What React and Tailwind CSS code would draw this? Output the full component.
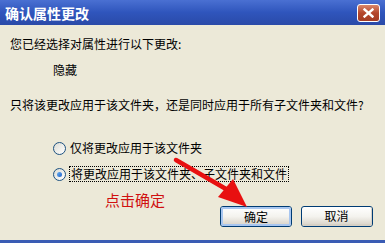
import React from 'react'

const FONT = '"Noto Sans CJK SC", "Liberation Sans", sans-serif'

function Radio({ checked }) {
  return (
    <span className="relative inline-block h-[13px] w-[13px] shrink-0 rounded-full border border-[#1c5180] bg-gradient-to-br from-[#dcdcd4] to-white">
      {checked && (
        <span className="absolute left-[3px] top-[3px] h-[5px] w-[5px] rounded-full bg-gradient-to-br from-[#6ab0f0] to-[#1f5fc8]" />
      )}
    </span>
  )
}

function XpButton({ children, focused }) {
  return (
    <button className="flex h-[21px] w-[72px] items-center justify-center rounded-[3px] border border-[#003c74] bg-gradient-to-b from-white via-[#f4f3ee] to-[#d6d0c5] p-0">
      <span
        className={
          'flex h-full w-full items-center justify-center rounded-[2px] text-[12px] text-black ' +
          (focused ? 'border-2 border-[#a8c6f0]' : 'border-b-2 border-r border-[#d6d0c5]')
        }
      >
        {children}
      </span>
    </button>
  )
}

export default function App() {
  return (
    <div className="relative h-[243px] w-[385px] overflow-hidden bg-[#ece9d8]" style={{ fontFamily: FONT }}>
      <div className="flex h-[25px] items-center justify-between bg-gradient-to-b from-[#4a70d2] via-[#2f55bc] to-[#2a4aa8] pl-[5px] pr-[5px]">
        <span className="text-[14px] font-bold leading-none text-white">确认属性更改</span>
        <span className="flex h-[18px] w-[23px] items-center justify-center rounded-[3px] border border-white bg-gradient-to-b from-[#d9866a] via-[#b4462c] to-[#a33c24]">
          <svg width="11" height="10" viewBox="0 0 11 10">
            <path d="M1.5 1.5 L9.5 8.5 M9.5 1.5 L1.5 8.5" stroke="white" strokeWidth="2.4" strokeLinecap="square" />
          </svg>
        </span>
      </div>

      <div className="flex flex-col pl-[10px] text-[12px] leading-[14px] text-black">
        <div className="mt-[12px]">您已经选择对属性进行以下更改:</div>
        <div className="ml-[43px] mt-[12px]">隐藏</div>
        <div className="mt-[21px]">只将该更改应用于该文件夹，还是同时应用于所有子文件夹和文件?</div>
        <div className="ml-[43px] mt-[29px] flex items-center gap-[4px]">
          <Radio />
          <span>仅将更改应用于该文件夹</span>
        </div>
        <div className="ml-[43px] mt-[11px] flex items-center gap-[3px]">
          <Radio checked />
          <span className="border border-dotted border-black px-px">将更改应用于该文件夹、子文件夹和文件</span>
        </div>
        <div className="ml-[95px] mt-[10px] text-[15px] leading-[16px] text-[#d01010]">点击确定</div>
        <div className="-mt-[2px] flex justify-end gap-[9px] pr-[12px]">
          <XpButton focused>确定</XpButton>
          <XpButton>取消</XpButton>
        </div>
      </div>

      <svg className="absolute left-0 top-0" width="385" height="243" viewBox="0 0 385 243">
        <path d="M176 160 L226 189" stroke="#e81010" strokeWidth="4.5" strokeLinecap="round" />
        <polygon points="218,197 233,179 247,207" fill="#e81010" />
      </svg>

      <div className="absolute bottom-0 left-0 h-[3px] w-full bg-[#3a5cb4]" />
    </div>
  )
}
